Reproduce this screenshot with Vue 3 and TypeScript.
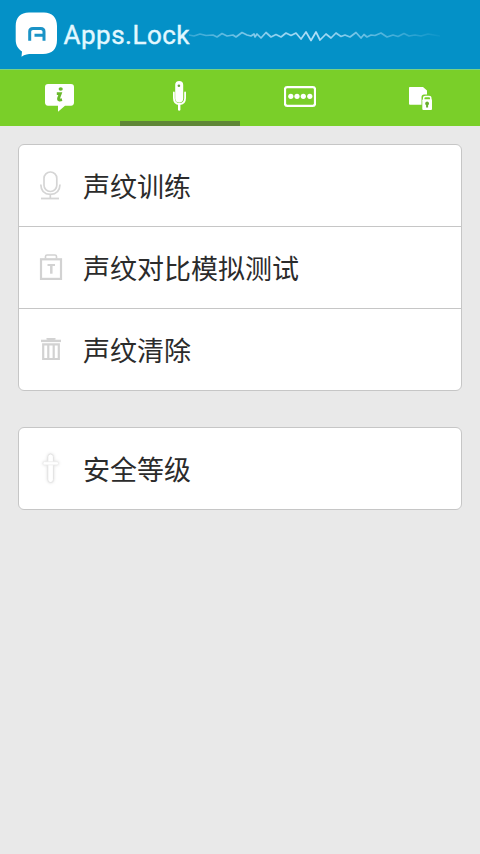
<script setup lang="ts">
import { ref } from 'vue'

type IconName = 'mic' | 'test' | 'trash' | 'level'
interface Item {
  label: string
  icon: IconName
}

const tabs: string[] = ['info', 'voice', 'password', 'files']
const active = ref<string>('voice')

const groups: Item[][] = [
  [
    { label: '声纹训练', icon: 'mic' },
    { label: '声纹对比模拟测试', icon: 'test' },
    { label: '声纹清除', icon: 'trash' },
  ],
  [{ label: '安全等级', icon: 'level' }],
]
</script>

<template>
  <div class="screen">
    <header class="header">
      <svg class="brand" width="480" height="69" viewBox="0 0 480 69">
        <defs>
          <linearGradient id="fade" gradientUnits="userSpaceOnUse" x1="189" y1="0" x2="440" y2="0">
            <stop offset="0" stop-color="#a9dcf5" stop-opacity="0.3" />
            <stop offset="0.25" stop-color="#a9dcf5" stop-opacity="0.75" />
            <stop offset="0.5" stop-color="#b9e3fa" stop-opacity="0.95" />
            <stop offset="0.7" stop-color="#a9dcf5" stop-opacity="0.6" />
            <stop offset="1" stop-color="#a9dcf5" stop-opacity="0.05" />
          </linearGradient>
        </defs>
        <path
          fill="#fff"
          d="M29 12.500H44C52 12.500 57 17.500 57 26V40C57 49 52 54 43 54H31.500C28.500 54 24.500 54.500 21.500 56.700L22 51.500C18 49 15.700 45 15.700 40V26C15.700 17.500 20.500 12.500 29 12.500Z"
        />
        <path
          fill="none"
          stroke="#1b93c6"
          stroke-width="3"
          d="M29.700 40.700V31.500C29.700 29.500 31 28.500 33 28.500H40.700C42.700 28.500 44 29.500 44 31.500V40.700M34.500 35.300H43"
        />
        <text x="63.500" y="43.500" class="brand-name" textLength="126" lengthAdjust="spacing">Apps.Lock</text>
        <path
          fill="none"
          stroke="url(#fade)"
          stroke-width="1.700"
          stroke-linejoin="round"
          d="M189 35L194 36L200 34L206 35.500L213 35L217 37L222 33.500L227 36L233 35L236 37L242 32.500L247 35L251 36L254 34L255 37L257 34L261 38L266 32.500L271 37L276 34.500L281 37L286 33L291 35.500L296 33L301 39L306 32L311 40.500L316 32L320 40L326 34L331 38L336 33L341 36.500L345 35L350 37L356 32.500L361 38L364 34.500L367 37L371 35L375 35.500L381 33L387 37L393 35L398 36.500L404 33.500L409 36L415 35L421 36L428 34L434 35L440 36"
        />
      </svg>
    </header>

    <nav class="tabs">
      <button
        v-for="tab in tabs"
        :key="tab"
        type="button"
        class="tab"
        :class="{ active: tab === active }"
        @click="active = tab"
      >
        <svg v-if="tab === 'info'" width="32" height="32" viewBox="0 0 32 32">
          <path
            fill="#fff"
            d="M4 4H27C29 4 30 5.200 30 7V22.500C30 24.500 29 25.700 27 25.700H21L14 31.800V25.700H4C2 25.700 1 24.500 1 22.500V7C1 5.200 2 4 4 4Z"
          />
          <ellipse cx="16.700" cy="9" rx="2.100" ry="1.700" fill="#6ab92b" />
          <path fill="none" stroke="#6ab92b" stroke-width="2.800" d="M12.800 13.700H16.300L14.500 18.500Q14 20.700 18 19.700" />
        </svg>
        <svg v-else-if="tab === 'voice'" width="32" height="32" viewBox="0 0 32 32">
          <rect x="11.200" y="1" width="8" height="21.500" rx="4" fill="#fff" />
          <circle cx="14.900" cy="5.700" r="1.300" fill="#6aa43b" />
          <path
            fill="none"
            stroke="#fff"
            stroke-width="1.800"
            stroke-linecap="round"
            d="M9.900 12.500V18C9.900 22 12 24 15.400 24S21.100 22 21.100 18V12.500"
          />
          <path stroke="#fff" stroke-width="2.400" stroke-linecap="round" d="M15.200 24V29.500" />
        </svg>
        <svg v-else-if="tab === 'password'" width="32" height="32" viewBox="0 0 32 32">
          <rect x="1" y="7.200" width="30" height="18.600" rx="2.200" fill="none" stroke="#fff" stroke-width="2.200" />
          <circle v-for="x in [6.8, 13, 19.3, 25.8]" :key="x" :cx="x" cy="16.300" r="2.600" fill="#fff" />
        </svg>
        <svg v-else width="32" height="32" viewBox="0 0 32 32">
          <path
            fill="#fff"
            d="M6 7H19L23 10.500V14.500H20C18.500 14.500 17.500 15.500 17.500 17V24.800H6C5.300 24.800 5 24.500 5 24V8C5 7.300 5.300 7 6 7Z"
          />
          <path fill="none" stroke="#fff" stroke-width="1.500" d="M19.700 20V18.200Q19.700 16.500 21.500 16.500H25Q26.800 16.500 26.800 18.200V20" />
          <rect x="18.300" y="19.300" width="9.700" height="10.700" rx="1" fill="#fff" />
          <path fill="#69ae2e" d="M23.100 21.500a2 2 0 0 1 1 3.700V27.500h-2V25.200a2 2 0 0 1 1-3.700Z" />
        </svg>
      </button>
    </nav>

    <main class="content">
      <ul v-for="(group, g) in groups" :key="g" class="card">
        <li v-for="item in group" :key="item.label" class="row">
          <svg v-if="item.icon === 'mic'" class="icon" width="32" height="36" viewBox="0 0 32 36">
            <g fill="none" stroke="#d5d5d5" stroke-width="1.700">
              <rect x="9" y="4" width="12.800" height="19.500" rx="6.300" />
              <path d="M5.800 16.500C6 23.500 10 26.300 15.300 26.300S24.800 23.500 25 16.500M15.300 26.300V30.500" />
              <path stroke-width="1.800" d="M6 30.500H24" />
            </g>
          </svg>
          <svg v-else-if="item.icon === 'test'" class="icon" width="32" height="36" viewBox="0 0 32 36">
            <g fill="none" stroke="#d2d2d2">
              <rect x="6" y="9.300" width="20" height="19.600" stroke-width="2.200" />
              <path stroke-width="1.600" d="M10.500 8.500V6.500Q10.500 5 12 5H20Q21.500 5 21.500 6.500V8.500" />
              <path stroke-width="2" d="M12.500 15H20" />
              <path stroke-width="2.500" d="M16.300 15V23.700" />
            </g>
          </svg>
          <svg v-else-if="item.icon === 'trash'" class="icon" width="32" height="36" viewBox="0 0 32 36">
            <g fill="none" stroke="#d2d2d2">
              <path stroke-width="2.400" d="M6 8.900H26" />
              <path stroke-width="2" d="M12.500 7.700V7H19.500V7.700" />
              <path stroke-width="2.200" d="M8.200 12.300H23.800V27H8.200ZM13.300 12.300V27M18.700 12.300V27" />
            </g>
          </svg>
          <svg v-else class="icon level" width="32" height="36" viewBox="0 0 32 36">
            <rect x="12.800" y="3" width="5.600" height="28.500" rx="2.800" fill="#fff" stroke="#e3e3e3" stroke-width="1" />
            <rect x="8" y="10.700" width="15.500" height="3.200" rx="1.500" fill="#fff" stroke="#ececec" stroke-width="0.800" />
          </svg>
          <span class="label">{{ item.label }}</span>
        </li>
      </ul>
    </main>
  </div>
</template>

<style>
body {
  margin: 0;
  background: #e9e9e9;
}
</style>

<style scoped>
.screen {
  display: flex;
  flex-direction: column;
  min-height: 854px;
  background: #e9e9e9;
  font-family: 'Noto Sans CJK SC', sans-serif;
}
.header {
  height: 69px;
  background: #0491c7;
}
.brand {
  display: block;
}
.brand-name {
  font-family: Roboto, sans-serif;
  font-size: 26px;
  font-weight: 400;
  fill: #e2f8ff;
  stroke: #e2f8ff;
  stroke-width: 0.4px;
}
.tabs {
  display: grid;
  grid-template-columns: repeat(4, 1fr);
  height: 57px;
  box-sizing: border-box;
  border-top: 1px solid #78d383;
  background: #7acf29;
}
.tab {
  display: flex;
  justify-content: center;
  align-items: flex-start;
  padding: 10px 0 0;
  border: 0;
  border-bottom: 5px solid transparent;
  background: none;
}
.tab.active {
  border-bottom-color: #5f8637;
}
.content {
  display: flex;
  flex-direction: column;
  gap: 36px;
  padding: 18px;
}
.card {
  margin: 0;
  padding: 0;
  list-style: none;
  border: 1px solid #c6c6c6;
  border-radius: 6px;
  background: #fff;
}
.row {
  display: flex;
  align-items: center;
  height: 81px;
  padding-left: 16px;
}
.row + .row {
  border-top: 1px solid #c6c6c6;
}
.icon {
  flex: none;
  margin-right: 16px;
}
.level {
  filter: drop-shadow(0 0 1.5px #dcdcdc);
}
.label {
  font-size: 27px;
  line-height: 40px;
  color: #2b2b2b;
}
</style>
